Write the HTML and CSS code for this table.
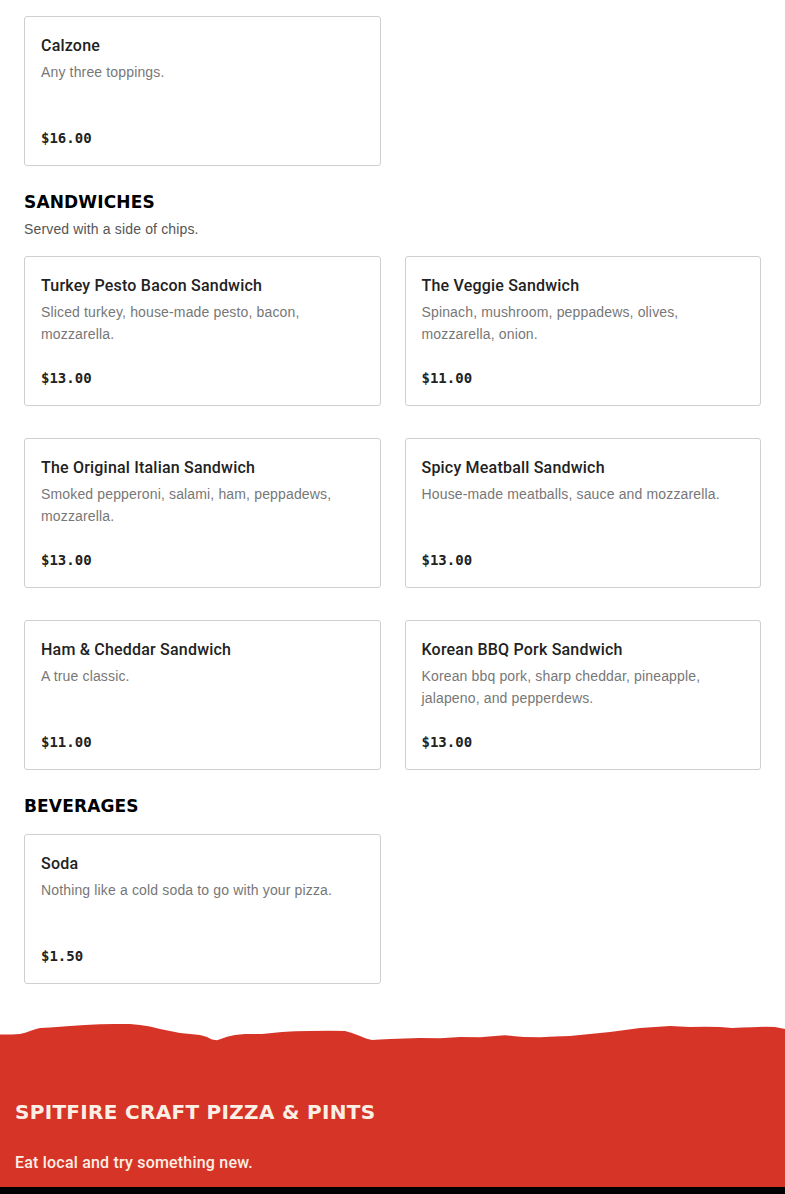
FILE: index.html
```html
<!DOCTYPE html>
<html lang="en">
<head>
<meta charset="utf-8">
<title>Menu</title>
<link rel="stylesheet" href="styles.css">
</head>
<body>
<main class="menu">
  <section class="section first">
    <div class="grid">
      <article class="card">
        <h3 class="card-title">Calzone</h3>
        <p class="card-desc">Any three toppings.</p>
        <p class="card-price">$16.00</p>
      </article>
    </div>
  </section>

  <section class="section">
    <header class="section-head">
      <h2 class="section-title">SANDWICHES</h2>
      <p class="section-sub">Served with a side of chips.</p>
    </header>
    <div class="grid">
      <article class="card">
        <h3 class="card-title">Turkey Pesto Bacon Sandwich</h3>
        <p class="card-desc">Sliced turkey, house-made pesto, bacon, mozzarella.</p>
        <p class="card-price">$13.00</p>
      </article>
      <article class="card">
        <h3 class="card-title">The Veggie Sandwich</h3>
        <p class="card-desc">Spinach, mushroom, peppadews, olives, mozzarella, onion.</p>
        <p class="card-price">$11.00</p>
      </article>
      <article class="card">
        <h3 class="card-title">The Original Italian Sandwich</h3>
        <p class="card-desc">Smoked pepperoni, salami, ham, peppadews, mozzarella.</p>
        <p class="card-price">$13.00</p>
      </article>
      <article class="card">
        <h3 class="card-title">Spicy Meatball Sandwich</h3>
        <p class="card-desc">House-made meatballs, sauce and mozzarella.</p>
        <p class="card-price">$13.00</p>
      </article>
      <article class="card">
        <h3 class="card-title">Ham &amp; Cheddar Sandwich</h3>
        <p class="card-desc">A true classic.</p>
        <p class="card-price">$11.00</p>
      </article>
      <article class="card">
        <h3 class="card-title">Korean BBQ Pork Sandwich</h3>
        <p class="card-desc">Korean bbq pork, sharp cheddar, pineapple, jalapeno, and pepperdews.</p>
        <p class="card-price">$13.00</p>
      </article>
    </div>
  </section>

  <section class="section">
    <header class="section-head">
      <h2 class="section-title">BEVERAGES</h2>
    </header>
    <div class="grid">
      <article class="card">
        <h3 class="card-title">Soda</h3>
        <p class="card-desc">Nothing like a cold soda to go with your pizza.</p>
        <p class="card-price">$1.50</p>
      </article>
    </div>
  </section>
</main>

<footer class="footer">
  <svg class="torn" viewBox="0 0 785 30" preserveAspectRatio="none" aria-hidden="true">
    <path d="M0 19.5 L12 19.6 L20 19 L26 17.5 L30 16 L36 14 L40 13 L50 12.4 L60 11.8 L70 11 L85 10 L100 9.3 L115 9 L130 9 L140 10 L150 11.5 L160 14 L170 16 L180 18 L190 19 L200 20 L207 22 L212 24.5 L217 25.2 L222 23.5 L228 21.5 L235 20 L245 19 L262 19 L272 18 L282 17 L295 16.2 L310 16 L330 15.8 L345 16 L352 18 L360 21 L366 23.5 L372 25 L380 24.6 L390 24 L405 23.6 L420 23 L440 23.2 L460 22 L480 22.2 L495 21 L505 20.2 L515 21.2 L524 22 L540 22.2 L555 21.6 L570 21 L580 20 L595 18.5 L610 17 L625 15 L640 13 L655 12 L670 11 L680 11.6 L690 12 L705 11.8 L720 12 L732 13 L742 12.6 L752 12.2 L765 11.8 L775 12 L785 14 L785 30 L0 30 Z" fill="#d73428"/>
  </svg>
  <div class="footer-body">
    <h2 class="footer-title">SPITFIRE CRAFT PIZZA &amp; PINTS</h2>
    <p class="footer-tag">Eat local and try something new.</p>
  </div>
  <div class="footer-bar"></div>
</footer>
</body>
</html>
```

FILE: styles.css
```css
* { box-sizing: border-box; }

html, body {
  margin: 0;
  padding: 0;
  background: #ffffff;
}

body {
  font-family: "Liberation Sans", Arial, sans-serif;
  color: #222222;
}

.menu {
  padding: 16px 24px 0;
  display: flex;
  flex-direction: column;
  gap: 24px;
}

.section-head {
  margin-bottom: 16px;
}

.section-title {
  margin: 0;
  font-family: "DejaVu Sans", sans-serif;
  font-weight: 700;
  font-size: 17px;
  line-height: 24px;
  color: #000000;
  letter-spacing: 0.15px;
}

.section-sub {
  margin: 3px 0 -1px;
  font-size: 14px;
  line-height: 24px;
  letter-spacing: 0.15px;
  color: #555555;
}

.grid {
  display: grid;
  grid-template-columns: 1fr 1fr;
  column-gap: 24px;
  row-gap: 32px;
}

.card {
  min-height: 150px;
  border: 1px solid #cfcfcf;
  border-radius: 3px;
  padding: 17px 16px 16px;
  display: flex;
  flex-direction: column;
}

.card-title {
  margin: 0 0 3px;
  font-family: Roboto, "Liberation Sans", sans-serif;
  font-size: 16px;
  line-height: 24px;
  font-weight: 500;
  letter-spacing: 0.2px;
  color: #222222;
}

.card-desc {
  margin: 0;
  font-size: 14px;
  line-height: 22px;
  letter-spacing: 0.15px;
  color: #777777;
}

.card-price {
  margin: auto 0 0;
  padding-top: 12px;
  font-family: "DejaVu Sans Mono", "Liberation Mono", monospace;
  font-weight: 700;
  font-size: 14px;
  line-height: 22px;
  color: #222222;
}

.footer {
  margin-top: 31px;
}

.torn {
  display: block;
  width: 100%;
  height: 30px;
  margin-bottom: -1px;
}

.footer-body {
  background: #d73428;
  padding: 54px 15px 12px;
}

.footer-title {
  margin: 0;
  font-family: "DejaVu Sans", sans-serif;
  font-weight: 700;
  font-size: 20px;
  line-height: 28px;
  letter-spacing: 0.3px;
  color: #fbefe5;
}

.footer-tag {
  margin: 25px 0 0;
  font-family: Roboto, "Liberation Sans", sans-serif;
  font-weight: 500;
  font-size: 16px;
  line-height: 24px;
  letter-spacing: 0.2px;
  color: #fbefe5;
}

.footer-bar {
  height: 40px;
  background: #000000;
}
```
